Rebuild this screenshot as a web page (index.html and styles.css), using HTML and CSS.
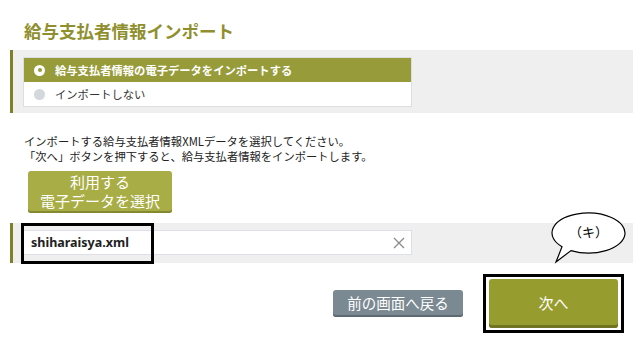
FILE: index.html
```html
<!DOCTYPE html>
<html lang="ja">
<head>
<meta charset="utf-8">
<title>給与支払者情報インポート</title>
<link rel="stylesheet" href="styles.css">
</head>
<body>
<div class="page">
  <h1 class="title">給与支払者情報インポート</h1>

  <div class="panel panel-radio">
    <div class="radio-list">
      <div class="radio-row selected"><span class="radio on"></span><span class="label">給与支払者情報の電子データをインポートする</span></div>
      <div class="radio-row"><span class="radio off"></span><span class="label">インポートしない</span></div>
    </div>
  </div>

  <p class="desc">インポートする給与支払者情報XMLデータを選択してください。<br>「次へ」ボタンを押下すると、給与支払者情報をインポートします。</p>

  <button class="btn-select">利用する<br>電子データを選択</button>

  <div class="panel panel-file">
    <div class="file-input">
      <span class="file-name">shiharaisya.xml</span>
      <svg class="clear" width="12" height="12" viewBox="0 0 12 12"><path d="M1 1 L11 11 M11 1 L1 11" stroke="#8a8a8a" stroke-width="1.3" fill="none"/></svg>
    </div>
    <div class="mark-box"></div>
    <svg class="bubble" width="80" height="56" viewBox="0 0 80 56">
      <path d="M13 35.8 L7 51 L22 39.6 A36.5 20 0 1 0 13 35.8 Z" fill="#fff" stroke="#000" stroke-width="1.2"/>
      <text x="39.5" y="26" text-anchor="middle" class="bubble-text">（キ）</text>
    </svg>
  </div>

  <div class="actions">
    <button class="btn-back">前の画面へ戻る</button>
    <div class="next-frame"><button class="btn-next">次へ</button></div>
  </div>
</div>
</body>
</html>
```
FILE: styles.css
```css
* { box-sizing: border-box; }
html, body { margin: 0; padding: 0; background: #fff; }
body {
  font-family: "Noto Sans CJK JP", "Noto Sans", sans-serif;
  color: #222;
}
.page {
  width: 643px;
  height: 344px;
  padding: 19px 10px 0 10px;
  overflow: hidden;
}
.title {
  margin: 0 0 0 14px;
  font-size: 17.5px;
  line-height: 24px;
  font-weight: 700;
  color: #8f8f2e;
}
.panel {
  position: relative;
  background: #efefef;
  border-left: 3px solid #7f8128;
}
.panel-radio {
  margin-top: 7px;
  padding: 8px 0 7px 11px;
}
.radio-list {
  width: 387px;
  background: #fff;
  box-shadow: 0 0 0 1px #dcdfe2;
}
.radio-row {
  height: 24px;
  display: flex;
  align-items: center;
  padding-left: 10px;
  gap: 10px;
  font-size: 11.3px;
  color: #333;
}
.radio-row.selected {
  background: #979b39;
  color: #fff;
  font-weight: 700;
}
.radio {
  width: 11px;
  height: 11px;
  border-radius: 50%;
  flex: none;
}
.radio.on {
  background: #fff;
  display: flex;
  align-items: center;
  justify-content: center;
}
.radio.on::after {
  content: "";
  width: 4px;
  height: 4px;
  border-radius: 50%;
  background: #979b39;
}
.radio.off { background: #d4d7db; }
.label { line-height: 24px; }

.desc {
  margin: 21px 0 0 14px;
  font-size: 11.3px;
  line-height: 15px;
  color: #222;
}
.btn-select {
  display: block;
  margin: 7px 0 0 18px;
  width: 144px;
  height: 42px;
  padding: 1px 0 3px;
  border: none;
  border-radius: 3px;
  background: #a9ad46;
  box-shadow: inset 0 -2px 0 #84882f;
  color: #fff;
  font-family: inherit;
  font-size: 15px;
  line-height: 19px;
}
.panel-file {
  margin-top: 10px;
  padding: 8px 0 9px 11px;
}
.file-input {
  width: 387px;
  height: 23px;
  background: #fff;
  box-shadow: 0 0 0 1px #dde0e4;
  display: flex;
  align-items: center;
  justify-content: space-between;
  padding: 0 6px 0 7px;
}
.file-name {
  font-family: "Noto Sans", "Noto Sans CJK JP", sans-serif;
  font-weight: 700;
  font-size: 12.5px;
  color: #222;
}
.clear { display: block; }
.mark-box {
  position: absolute;
  left: 8px;
  top: 0;
  width: 133px;
  height: 41px;
  border: 3px solid #000;
}
.bubble {
  position: absolute;
  left: 536px;
  top: -12px;
  overflow: visible;
}
.bubble-text {
  font-family: "Noto Sans CJK JP", sans-serif;
  font-size: 13px;
  fill: #000;
}
.actions {
  margin-top: 11px;
  padding-right: 9px;
  display: flex;
  justify-content: flex-end;
  align-items: center;
  gap: 20px;
}
.btn-back {
  width: 130px;
  height: 27px;
  border: none;
  border-radius: 3px;
  background: #7b8992;
  box-shadow: inset 0 -2px 0 #5d6a72;
  color: #fff;
  font-family: inherit;
  font-size: 14.5px;
  line-height: 25px;
  padding: 0 0 2px;
}
.next-frame {
  border: 3px solid #000;
  padding: 2px 3px;
}
.btn-next {
  display: block;
  width: 129px;
  height: 49px;
  border: none;
  border-radius: 3px;
  background: #979c2f;
  box-shadow: inset 0 -3px 0 #6f7322;
  color: #fff;
  font-family: inherit;
  font-size: 15px;
  padding: 0 0 3px;
}
```
